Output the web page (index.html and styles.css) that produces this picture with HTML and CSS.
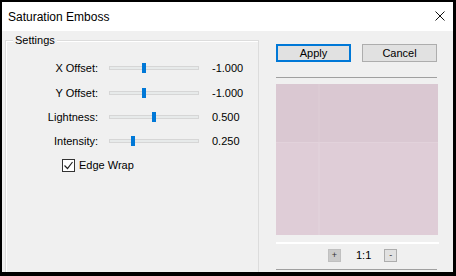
FILE: index.html
```html
<!DOCTYPE html>
<html lang="en">
<head>
  <meta charset="UTF-8">
  <title>Saturation Emboss</title>
  <link rel="stylesheet" href="styles.css">
</head>
<body>
  <div class="window">
    <!-- title bar -->
    <div class="titlebar">
      <span class="title">Saturation Emboss</span>
      <svg class="close" width="10" height="10" viewBox="0 0 10 10">
        <path d="M0.5 0.5 L9.5 9.5 M9.5 0.5 L0.5 9.5" stroke="#111" stroke-width="1" fill="none"/>
      </svg>
    </div>

    <div class="content">
      <!-- settings group -->
      <div class="group">
        <span class="legend">Settings</span>
        <div class="rows">
          <span class="label">X Offset:</span>
          <div class="track"><span class="thumb" style="left: 32px"></span></div>
          <span class="value">-1.000</span>

          <span class="label">Y Offset:</span>
          <div class="track"><span class="thumb" style="left: 32px"></span></div>
          <span class="value">-1.000</span>

          <span class="label">Lightness:</span>
          <div class="track"><span class="thumb" style="left: 42px"></span></div>
          <span class="value">0.500</span>

          <span class="label">Intensity:</span>
          <div class="track"><span class="thumb" style="left: 21px"></span></div>
          <span class="value">0.250</span>
        </div>
        <label class="check">
          <span class="box">
            <svg width="11" height="11" viewBox="0 0 11 11">
              <path d="M1.5 5.5 L4.5 8.5 L9.5 2" stroke="#222" stroke-width="1.2" fill="none"/>
            </svg>
          </span>
          Edge Wrap
        </label>
      </div>

      <!-- buttons and preview -->
      <div class="side">
        <div class="buttons">
          <button class="btn default">Apply</button>
          <button class="btn">Cancel</button>
        </div>
        <div class="sep"></div>
        <div class="preview">
          <div class="preview-top"></div>
        </div>
        <div class="sep-white"></div>
        <div class="zoom">
          <span class="zbtn pressed">+</span>
          <span class="ratio">1:1</span>
          <span class="zbtn">-</span>
        </div>
        <div class="sep bottom"></div>
      </div>
    </div>
  </div>
</body>
</html>
```

FILE: styles.css
```css
/* base */
body {
  margin: 0;
  background: #000;
  font-family: "Liberation Sans", Arial, sans-serif;
  font-size: 11px;
  color: #000;
}

.window {
  margin: 2px 3px 4px 2px;
  height: 270px;
  background: #f0f0f0;
  overflow: hidden;
}

/* title bar */
.titlebar {
  height: 29px;
  background: #fff;
  display: flex;
  align-items: center;
  justify-content: space-between;
  padding: 0 8px 0 6px;
}

.title {
  font-size: 12px;
  margin-top: 1px;
}

.close {
  margin-top: -1px;
}

.content {
  display: flex;
  height: 241px;
}

/* settings group */
.group {
  position: relative;
  margin: 9px 0 0 3px;
  width: 252px;
  height: 260px;
  border: 1px solid #dcdcdc;
  box-shadow: inset 1px 1px 0 #fff;
}

.legend {
  position: absolute;
  top: -7px;
  left: 7px;
  padding: 0 2px;
  background: #f0f0f0;
  line-height: 13px;
}

.rows {
  display: grid;
  grid-template-columns: 92px 90px auto;
  grid-template-rows: 24px 25px 24px 24px;
  column-gap: 11px;
  align-items: center;
  padding-top: 15px;
}

.rows .value {
  margin-left: 2px;
}

.label {
  text-align: right;
}

.track {
  position: relative;
  height: 4px;
  background: #e7eaea;
  border: 1px solid #d6d6d6;
  box-sizing: border-box;
}

.thumb {
  position: absolute;
  top: -4px;
  width: 4px;
  height: 10px;
  background: #0078d7;
}

.check {
  display: flex;
  align-items: center;
  height: 24px;
  margin-left: 56px;
}

.check .box {
  width: 11px;
  height: 11px;
  border: 1px solid #333;
  background: #fff;
  margin-right: 4px;
  display: flex;
}

/* right side */
.side {
  margin-left: 17px;
  width: 162px;
  display: flex;
  flex-direction: column;
}

.buttons {
  display: flex;
  gap: 11px;
  margin-top: 13px;
}

.btn {
  width: 75px;
  height: 18px;
  padding: 0;
  font-family: inherit;
  font-size: 11px;
  background: #e1e1e1;
  border: 1px solid #adadad;
  color: #000;
}

.btn.default {
  border: 2px solid #0078d7;
}

.sep {
  height: 1px;
  background: #a0a0a0;
  margin-top: 15px;
  width: 161px;
}

.preview {
  margin-top: 6px;
  height: 151px;
  background: linear-gradient(to right, transparent 42px, #e1d1da 42px, #e1d1da 44px, transparent 44px), #dfcdd7;
}

.preview-top {
  height: 58px;
  background: linear-gradient(to right, transparent 42px, #dccbd4 42px, #dccbd4 44px, transparent 44px), #dac8d2;
  border-bottom: 1px solid #e2d2db;
}

.sep-white {
  height: 2px;
  background: #fff;
  margin-top: 7px;
  width: 163px;
}

.zoom {
  display: flex;
  align-items: center;
  margin-top: 5px;
  height: 12px;
  padding-left: 52px;
}

.zbtn {
  width: 11px;
  height: 11px;
  border: 1px solid #adadad;
  background: #e1e1e1;
  display: flex;
  align-items: center;
  justify-content: center;
  font-size: 9px;
  color: #333;
}

.zbtn.pressed {
  background: #cacaca;
  border-color: #c0c0c0;
}

.ratio {
  margin: 0 13px 0 15px;
  font-size: 11px;
}

.sep.bottom {
  margin-top: 8px;
}
```
